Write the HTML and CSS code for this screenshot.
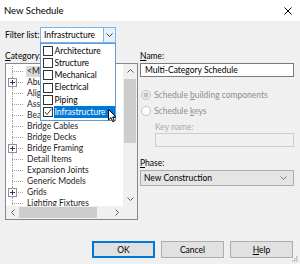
FILE: index.html
```html
<!DOCTYPE html>
<html lang="en">
<head>
    <meta charset="UTF-8">
    <title>New Schedule</title>
    <link rel="stylesheet" href="styles.css">
</head>
<body>
    <div class="dialog">
        <div class="titlebar">
            <span class="title">New Schedule</span>
            <svg class="close" width="8" height="8" viewBox="0 0 8 8"><path d="M0.5 0.5 L7.5 7.5 M7.5 0.5 L0.5 7.5" stroke="#000" stroke-width="1"/></svg>
        </div>

        <div class="content">
            <div class="filter-row">
                <span class="filter-label">Filter list:</span>
                <div class="combo">
                    <span class="combo-text">Infrastructure</span>
                    <span class="combo-btn">
                        <svg width="7" height="4" viewBox="0 0 7 4"><path d="M0.5 0.5 L3.5 3.5 L6.5 0.5" fill="none" stroke="#444" stroke-width="1"/></svg>
                    </span>
                </div>
            </div>

            <div class="main">
                <div class="left-col">
                    <div class="field-label"><u>C</u>ategory:</div>
                    <div class="tree">
                        <div class="tree-items">
                            <div class="node selected"><span class="branch"></span><span class="node-text">&lt;Multi-Category&gt;</span></div>
                            <div class="node"><span class="branch"><svg class="expander" width="9" height="9" viewBox="0 0 9 9"><rect x="0.5" y="0.5" width="8" height="8" fill="#fff" stroke="#919191"/><path d="M2 4.5 H7 M4.5 2 V7" stroke="#1e3c6e" stroke-width="1"/></svg></span><span class="node-text">Abutments</span></div>
                            <div class="node"><span class="branch"></span><span class="node-text">Alignments</span></div>
                            <div class="node"><span class="branch"></span><span class="node-text">Assemblies</span></div>
                            <div class="node"><span class="branch"></span><span class="node-text">Bearings</span></div>
                            <div class="node"><span class="branch"></span><span class="node-text">Bridge Cables</span></div>
                            <div class="node"><span class="branch"></span><span class="node-text">Bridge Decks</span></div>
                            <div class="node"><span class="branch"><svg class="expander" width="9" height="9" viewBox="0 0 9 9"><rect x="0.5" y="0.5" width="8" height="8" fill="#fff" stroke="#919191"/><path d="M2 4.5 H7 M4.5 2 V7" stroke="#1e3c6e" stroke-width="1"/></svg></span><span class="node-text">Bridge Framing</span></div>
                            <div class="node"><span class="branch"></span><span class="node-text">Detail Items</span></div>
                            <div class="node"><span class="branch"></span><span class="node-text">Expansion Joints</span></div>
                            <div class="node"><span class="branch"></span><span class="node-text">Generic Models</span></div>
                            <div class="node"><span class="branch"><svg class="expander" width="9" height="9" viewBox="0 0 9 9"><rect x="0.5" y="0.5" width="8" height="8" fill="#fff" stroke="#919191"/><path d="M2 4.5 H7 M4.5 2 V7" stroke="#1e3c6e" stroke-width="1"/></svg></span><span class="node-text">Grids</span></div>
                            <div class="node"><span class="branch"></span><span class="node-text">Lighting Fixtures</span></div>
                        </div>
                        <div class="vscroll">
                            <span class="arrow-btn"><svg width="7" height="4" viewBox="0 0 7 4"><path d="M0.5 3.5 L3.5 0.5 L6.5 3.5" fill="none" stroke="#606060"/></svg></span>
                            <span class="vtrack"><span class="vthumb"></span></span>
                            <span class="arrow-btn"><svg width="7" height="4" viewBox="0 0 7 4"><path d="M0.5 0.5 L3.5 3.5 L6.5 0.5" fill="none" stroke="#606060"/></svg></span>
                        </div>
                        <div class="hscroll">
                            <span class="arrow-btn"><svg width="4" height="7" viewBox="0 0 4 7"><path d="M3.5 0.5 L0.5 3.5 L3.5 6.5" fill="none" stroke="#606060"/></svg></span>
                            <span class="htrack"><span class="hthumb"></span></span>
                            <span class="arrow-btn"><svg width="4" height="7" viewBox="0 0 4 7"><path d="M0.5 0.5 L3.5 3.5 L0.5 6.5" fill="none" stroke="#606060"/></svg></span>
                        </div>
                        <div class="corner"></div>
                    </div>
                </div>

                <div class="right-col">
                    <div class="field-label"><u>N</u>ame:</div>
                    <div class="textbox">Multi-Category Schedule</div>
                    <div class="radio-row first">
                        <svg width="10" height="10" viewBox="0 0 10 10"><circle cx="5" cy="5" r="4.5" fill="#f0f0f0" stroke="#c2c2c2"/><circle cx="5" cy="5" r="2.5" fill="#c2c2c2"/></svg>
                        <span>Schedule <u>b</u>uilding components</span>
                    </div>
                    <div class="radio-row">
                        <svg width="10" height="10" viewBox="0 0 10 10"><circle cx="5" cy="5" r="4.5" fill="#fff" stroke="#c2c2c2"/></svg>
                        <span>Schedule <u>k</u>eys</span>
                    </div>
                    <div class="key-label">Key name:</div>
                    <div class="key-box"></div>
                    <div class="field-label phase-label"><u>P</u>hase:</div>
                    <div class="select">
                        <span>New Construction</span>
                        <svg width="7" height="4" viewBox="0 0 7 4"><path d="M0.5 0.5 L3.5 3.5 L6.5 0.5" fill="none" stroke="#777"/></svg>
                    </div>
                </div>
            </div>

            <div class="buttons">
                <button class="btn default">OK</button>
                <button class="btn">Cancel</button>
                <button class="btn"><u>H</u>elp</button>
            </div>
        </div>

        <!-- open drop-down of the filter combo -->
        <div class="dropdown">
            <div class="option"><span class="check"></span><span class="option-text">Architecture</span></div>
            <div class="option"><span class="check"></span><span class="option-text">Structure</span></div>
            <div class="option"><span class="check"></span><span class="option-text">Mechanical</span></div>
            <div class="option"><span class="check"></span><span class="option-text">Electrical</span></div>
            <div class="option"><span class="check"></span><span class="option-text">Piping</span></div>
            <div class="option active"><span class="check"><svg width="8" height="8" viewBox="0 0 8 8"><path d="M1 4 L3 6.5 L7.5 1" fill="none" stroke="#444" stroke-width="1"/></svg></span><span class="option-text">Infrastructure</span></div>
        </div>

        <svg class="cursor" width="9" height="14" viewBox="0 0 9 14"><path d="M0.5 0.5 V11 L3 8.6 L4.8 12.8 L6.4 12.1 L4.7 8 H8 Z" fill="#fff" stroke="#000" stroke-width="1"/></svg>

        <svg class="grip" width="6" height="6" viewBox="0 0 6 6"><rect x="4" y="0" width="1.5" height="1.5" fill="#b8b8b8"/><rect x="2" y="2" width="1.5" height="1.5" fill="#b8b8b8"/><rect x="4" y="2" width="1.5" height="1.5" fill="#b8b8b8"/><rect x="0" y="4" width="1.5" height="1.5" fill="#b8b8b8"/><rect x="2" y="4" width="1.5" height="1.5" fill="#b8b8b8"/><rect x="4" y="4" width="1.5" height="1.5" fill="#b8b8b8"/></svg>
    </div>
</body>
</html>
```

FILE: styles.css
```css
* { margin: 0; padding: 0; box-sizing: border-box; }
:root {
    --panel: #f0f0f0; --border: #828790; --blue: #0078d7;
    --text: #000; --tree-text: #2a1a1a; --disabled: #8f8f8f;
}
body { background: var(--panel); font-family: Lato, "Liberation Sans", sans-serif; font-size: 8.5px; color: var(--text); }
u { text-decoration: underline; text-underline-offset: 1px; }
.dialog { position: relative; width: 300px; height: 264px; background: var(--panel); overflow: hidden; }
.titlebar { height: 21px; background: #fff; display: flex; align-items: center; justify-content: space-between; padding: 0 8px 0 4px; }
.title { font-size: 9.5px; }
.content { padding: 6px 7px 0 5px; }
.filter-row { display: flex; align-items: center; height: 16px; }
.filter-label { width: 35px; }
.combo { width: 76px; height: 16px; display: flex; background: #fff; border: 1px solid #7eb4ea; }
.combo-text { flex: 1; padding-left: 3px; line-height: 14px; }
.combo-btn { width: 12px; display: flex; align-items: center; justify-content: center; background: #e5f1fb; border-left: 1px solid #7eb4ea; }
.main { display: grid; grid-template-columns: 133px 154px; column-gap: 2px; margin-top: 7px; }
.field-label { height: 13px; line-height: 13px; }
.tree { height: 157px; border: 1px solid var(--border); background: #fff; display: grid; grid-template-columns: 1fr 14px; grid-template-rows: 1fr 13px; }
.tree-items { overflow: hidden; padding-top: 1.5px; color: var(--tree-text); }
.node { display: flex; height: 11px; white-space: nowrap; }
.branch { width: 20px; flex: none; display: flex; align-items: center; padding-left: 2px;
    background:
        repeating-linear-gradient(to bottom, #a0a0a0 0 1px, transparent 1px 2px) 6px 0 / 1px 100% no-repeat,
        repeating-linear-gradient(to right, #a0a0a0 0 1px, transparent 1px 2px) 6px 5px / 12px 1px no-repeat; }
.expander { display: block; }
.node-text { line-height: 11px; padding: 0 1px; }
.node.selected .node-text { background: #d9d9d9; }
.vscroll { display: flex; flex-direction: column; background: var(--panel); }
.vscroll .arrow-btn { height: 14px; }
.arrow-btn { display: flex; align-items: center; justify-content: center; flex: none; }
.vtrack { flex: 1; padding: 1px 1px; }
.vthumb { display: block; height: 64px; background: #cdcdcd; }
.hscroll { display: flex; background: var(--panel); }
.hscroll .arrow-btn { width: 13px; }
.htrack { flex: 1; padding: 1px 0; }
.hthumb { display: block; width: 78px; height: 100%; background: #cdcdcd; }
.corner { background: var(--panel); }
.textbox { height: 14px; line-height: 12px; padding-left: 4px; background: #fff; border: 1px solid #7a7a7a; }
.radio-row { display: flex; align-items: center; gap: 3px; height: 13px; color: var(--disabled); margin-top: 3px; padding-left: 1px; }
.radio-row.first { margin-top: 11.5px; }
.key-label { height: 12px; line-height: 12px; margin: 3.5px 0 0 15px; color: #a9a9a9; }
.key-box { height: 14px; margin-left: 15px; border: 1px solid #cccccc; background: var(--panel); }
.phase-label { margin-top: 10px; height: 12px; line-height: 12px; }
.select { height: 16px; margin-top: 1px; display: flex; align-items: center; justify-content: space-between; padding: 0 6px 0 3px; background: #e5e5e5; border: 1px solid #adadad; }
.buttons { display: flex; justify-content: flex-end; gap: 6px; margin-top: 21px; }
.btn { width: 63px; height: 17px; font: inherit; color: var(--text); background: #e1e1e1; border: 1px solid #adadad; }
.btn.default { border-color: var(--blue); box-shadow: inset 0 0 0 1px var(--blue); }
.dropdown { position: absolute; left: 40px; top: 43px; width: 76px; height: 78px; padding-top: 0.5px; background: #fff; border: 1px solid #5b9bd9; }
.option { display: flex; align-items: center; height: 12.3px; }
.check { width: 10px; height: 10px; margin: 0 1px 0 1.5px; flex: none; border: 1px solid #333; background: #fff; display: flex; align-items: center; justify-content: center; }
.option-text { flex: 1; height: 12.3px; line-height: 12.3px; padding-left: 1px; }
.option.active .option-text { background: var(--blue); color: #fff; }
.cursor { position: absolute; left: 108px; top: 109px; }
.grip { position: absolute; right: 2px; bottom: 2px; }
```
